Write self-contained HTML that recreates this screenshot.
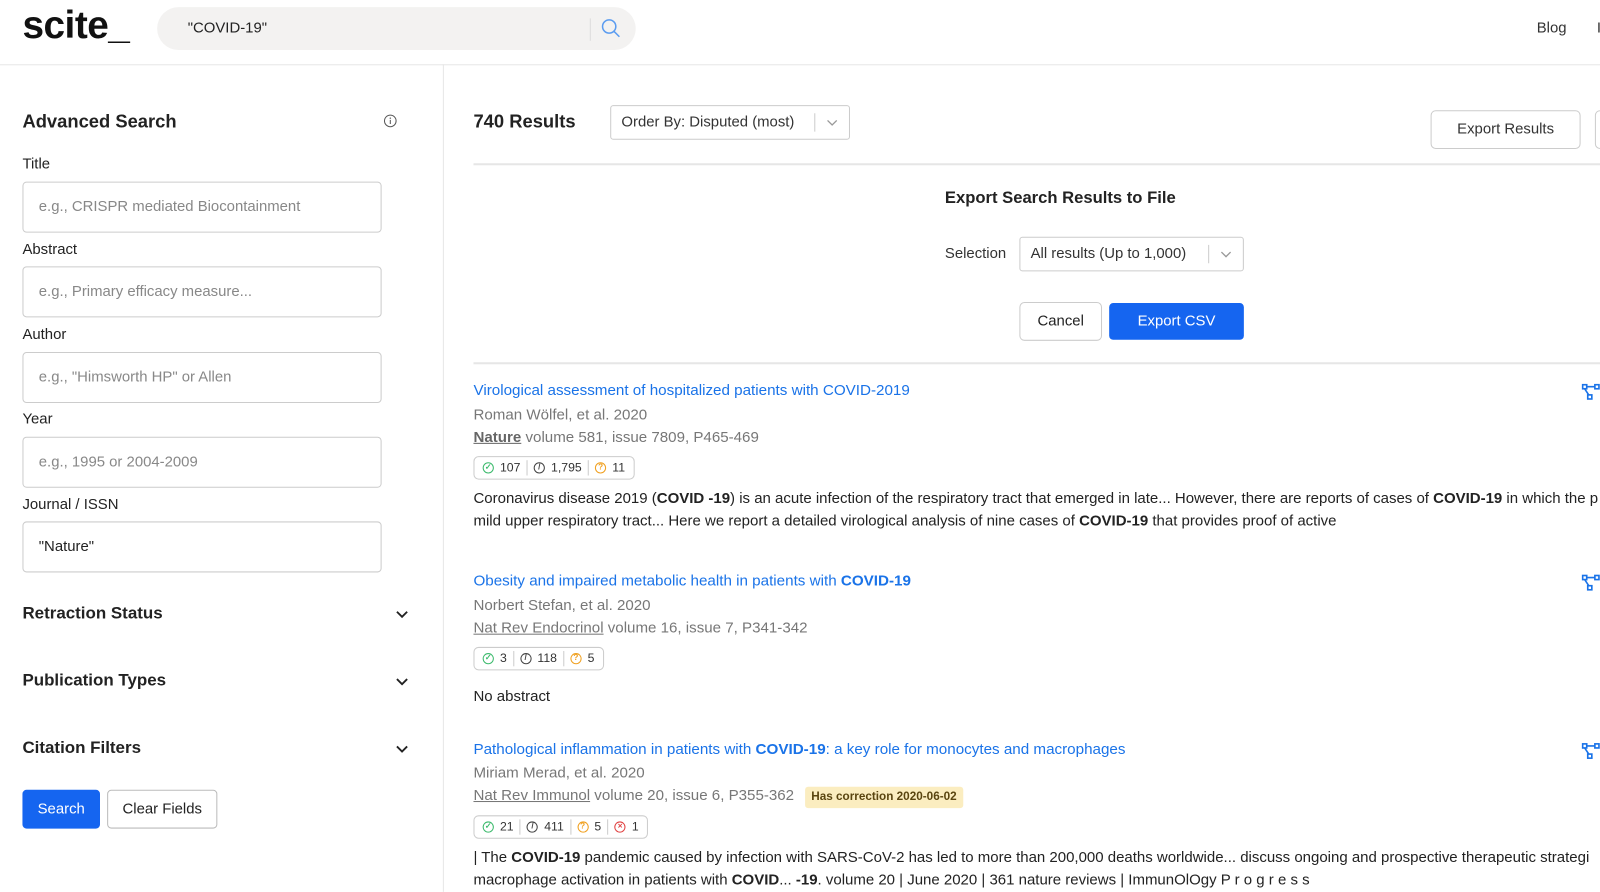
<!DOCTYPE html>
<html><head><meta charset="utf-8"><style>
*{box-sizing:border-box;margin:0;padding:0}
body{width:1600px;height:892px;overflow:hidden;background:#fff;font-family:"Liberation Sans",sans-serif;color:#222;position:relative}
#w{position:absolute;left:0;top:0;width:1568px;height:874px;transform:scale(1.0204);transform-origin:0 0;overflow:hidden}
.a{position:absolute;white-space:nowrap}
.inp{position:absolute;left:22px;width:352px;height:50px;border:1px solid #ccc;border-radius:4px;padding-left:15px;line-height:48px;font-size:14.6px;color:#888}
.lbl{position:absolute;left:22px;font-size:14.6px;color:#222}
.sec{position:absolute;left:22px;font-size:16.6px;font-weight:bold;color:#222}
.chev{position:absolute;left:388px;width:12px;height:12px}
.t{color:#1a73e8;font-size:14.9px}
.g{color:#777;font-size:14.8px}
.badge{position:absolute;height:23px;border:1px solid #ccc;border-radius:5px;font-size:12px;line-height:21px;padding:0 8px;display:flex;align-items:center;gap:6px;color:#333}
.sep{width:1px;height:15px;background:#ccc}
.ic{display:inline-block;width:11px;height:11px;border-radius:50%;border:1.4px solid;font-size:8px;line-height:8px;text-align:center;font-weight:bold}
.p{font-size:14.7px;color:#222}
</style></head><body><div id="w">
<div class="a" style="left:22px;top:4px;font-size:38px;font-weight:bold;letter-spacing:-0.5px;color:#111">scite_</div>
<div class="a" style="left:154px;top:7px;width:469px;height:42px;background:#f3f2f1;border-radius:21px"></div>
<div class="a" style="left:184px;top:20px;font-size:14.6px;color:#222">"COVID-19"</div>
<div class="a" style="left:578px;top:18px;width:1px;height:22px;background:#ddd"></div>
<svg class="a" style="left:589px;top:18px" width="20" height="20" viewBox="0 0 20 20"><circle cx="8" cy="8" r="6.5" fill="none" stroke="#5b9cf0" stroke-width="1.5"/><line x1="12.8" y1="12.8" x2="18" y2="18" stroke="#5b9cf0" stroke-width="1.5"/></svg>
<div class="a" style="left:1506px;top:20px;font-size:14.6px;color:#333">Blog</div>
<div class="a" style="left:1565px;top:20px;font-size:14.6px;color:#333">I</div>
<div class="a" style="left:0;top:63px;width:1600px;height:1px;background:#e6e6e6"></div>
<div class="a" style="left:434px;top:63px;width:1px;height:829px;background:#e6e6e6"></div>

<div class="sec" style="top:109px;font-size:18px">Advanced Search</div>
<svg class="a" style="left:376px;top:112px" width="13" height="13" viewBox="0 0 13 13"><circle cx="6.5" cy="6.5" r="5.7" fill="none" stroke="#555" stroke-width="1"/><line x1="6.5" y1="5.5" x2="6.5" y2="9.5" stroke="#555"/><circle cx="6.5" cy="3.8" r=".7" fill="#555"/></svg>
<div class="lbl" style="top:153px">Title</div>
<div class="inp" style="top:178px">e.g., CRISPR mediated Biocontainment</div>
<div class="lbl" style="top:237px">Abstract</div>
<div class="inp" style="top:261px">e.g., Primary efficacy measure...</div>
<div class="lbl" style="top:320px">Author</div>
<div class="inp" style="top:345px">e.g., "Himsworth HP" or Allen</div>
<div class="lbl" style="top:403px">Year</div>
<div class="inp" style="top:428px">e.g., 1995 or 2004-2009</div>
<div class="lbl" style="top:487px">Journal / ISSN</div>
<div class="inp" style="top:511px;color:#222">"Nature"</div>
<div class="sec" style="top:591px">Retraction Status</div>
<div class="sec" style="top:657px">Publication Types</div>
<div class="sec" style="top:723px">Citation Filters</div>
<svg class="chev" style="top:596px" viewBox="0 0 12 12"><path d="M1 3.5l5 5 5-5" fill="none" stroke="#222" stroke-width="1.8"/></svg>
<svg class="chev" style="top:662px" viewBox="0 0 12 12"><path d="M1 3.5l5 5 5-5" fill="none" stroke="#222" stroke-width="1.8"/></svg>
<svg class="chev" style="top:728px" viewBox="0 0 12 12"><path d="M1 3.5l5 5 5-5" fill="none" stroke="#222" stroke-width="1.8"/></svg>
<div class="a" style="left:22px;top:774px;width:76px;height:38px;background:#1565f0;border-radius:4px;color:#fff;font-size:14.6px;line-height:38px;text-align:center">Search</div>
<div class="a" style="left:105px;top:774px;width:108px;height:38px;border:1px solid #bbb;border-radius:4px;color:#222;font-size:14.6px;line-height:36px;text-align:center">Clear Fields</div>

<div class="a" style="left:464px;top:109px;font-size:18px;font-weight:bold">740 Results</div>
<div class="a" style="left:598px;top:103px;width:235px;height:34px;border:1px solid #ccc;border-radius:3px;font-size:14.6px;line-height:32px;padding-left:10px;color:#333">Order By: Disputed (most)</div>
<div class="a" style="left:798px;top:111px;width:1px;height:18px;background:#ccc"></div>
<svg class="a" style="left:810px;top:115px" width="11" height="10" viewBox="0 0 11 10"><path d="M1 3l4.5 4.5L10 3" fill="none" stroke="#999" stroke-width="1.3"/></svg>
<div class="a" style="left:1402px;top:108px;width:147px;height:38px;border:1px solid #ccc;border-radius:5px;font-size:14.6px;line-height:36px;text-align:center;color:#333">Export Results</div>
<div class="a" style="left:1563px;top:108px;width:40px;height:38px;border:1px solid #ccc;border-radius:5px"></div>
<div class="a" style="left:464px;top:160px;width:1136px;height:2px;background:#e6e6e6"></div>
<div class="a" style="left:926px;top:185px;font-size:16.3px;font-weight:bold">Export Search Results to File</div>
<div class="a" style="left:926px;top:241px;font-size:14.6px;color:#333">Selection</div>
<div class="a" style="left:999px;top:232px;width:220px;height:34px;border:1px solid #ccc;border-radius:3px;font-size:14.6px;line-height:32px;padding-left:10px;color:#333">All results (Up to 1,000)</div>
<div class="a" style="left:1184px;top:240px;width:1px;height:18px;background:#ccc"></div>
<svg class="a" style="left:1196px;top:244px" width="11" height="10" viewBox="0 0 11 10"><path d="M1 3l4.5 4.5L10 3" fill="none" stroke="#999" stroke-width="1.3"/></svg>
<div class="a" style="left:999px;top:296px;width:81px;height:38px;border:1px solid #ccc;border-radius:5px;font-size:14.6px;line-height:36px;text-align:center;color:#222">Cancel</div>
<div class="a" style="left:1087px;top:297px;width:132px;height:36px;background:#1565f0;border-radius:4px;font-size:14.6px;line-height:36px;text-align:center;color:#fff">Export CSV</div>
<div class="a" style="left:464px;top:355px;width:1136px;height:2px;background:#e6e6e6"></div>

<div class="a t" style="left:464px;top:375px">Virological assessment of hospitalized patients with COVID-2019</div>
<div class="a g" style="left:464px;top:399px">Roman Wölfel, et al. 2020</div>
<div class="a g" style="left:464px;top:421px"><u style="font-weight:bold;color:#666">Nature</u> volume 581, issue 7809, P465-469</div>
<div class="badge" style="left:464px;top:447px"><span class="ic" style="color:#3cba6c">✓</span>107<span class="sep"></span><span class="ic" style="color:#444">/</span>1,795<span class="sep"></span><span class="ic" style="color:#f0a020">?</span>11</div>
<div class="a p" style="left:464px;top:481px">Coronavirus disease 2019 (<b>COVID -19</b>) is an acute infection of the respiratory tract that emerged in late... However, there are reports of cases of <b>COVID-19</b> in which the p</div>
<div class="a p" style="left:464px;top:503px">mild upper respiratory tract... Here we report a detailed virological analysis of nine cases of <b>COVID-19</b> that provides proof of active</div>

<div class="a t" style="left:464px;top:562px">Obesity and impaired metabolic health in patients with <b>COVID-19</b></div>
<div class="a g" style="left:464px;top:586px">Norbert Stefan, et al. 2020</div>
<div class="a g" style="left:464px;top:608px"><u>Nat Rev Endocrinol</u> volume 16, issue 7, P341-342</div>
<div class="badge" style="left:464px;top:634px"><span class="ic" style="color:#3cba6c">✓</span>3<span class="sep"></span><span class="ic" style="color:#444">/</span>118<span class="sep"></span><span class="ic" style="color:#f0a020">?</span>5</div>
<div class="a p" style="left:464px;top:675px">No abstract</div>

<div class="a t" style="left:464px;top:727px">Pathological inflammation in patients with <b>COVID-19</b>: a key role for monocytes and macrophages</div>
<div class="a g" style="left:464px;top:750px">Miriam Merad, et al. 2020</div>
<div class="a g" style="left:464px;top:772px"><u>Nat Rev Immunol</u> volume 20, issue 6, P355-362</div>
<div class="a" style="left:789px;top:771px;height:21px;background:#fbedc0;border-radius:3px;padding:0 6px;font-size:11.5px;line-height:21px;color:#5a4510;font-weight:bold">Has correction 2020-06-02</div>
<div class="badge" style="left:464px;top:799px"><span class="ic" style="color:#3cba6c">✓</span>21<span class="sep"></span><span class="ic" style="color:#444">/</span>411<span class="sep"></span><span class="ic" style="color:#f0a020">?</span>5<span class="sep"></span><span class="ic" style="color:#e04040">×</span>1</div>
<div class="a p" style="left:464px;top:833px">| The <b>COVID-19</b> pandemic caused by infection with SARS-CoV-2 has led to more than 200,000 deaths worldwide... discuss ongoing and prospective therapeutic strategi</div>
<div class="a p" style="left:464px;top:855px">macrophage activation in patients with <b>COVID</b>... <b>-19</b>. volume 20 | June 2020 | 361 nature reviews | ImmunOlOgy P r o g r e s s</div>

<svg class="a" style="left:1550px;top:376px" width="20" height="18" viewBox="0 0 20 18"><g fill="none" stroke="#1a73e8" stroke-width="1.6"><rect x="1" y="1" width="4" height="4"/><rect x="6" y="11" width="4" height="4"/><rect x="13" y="1" width="4" height="4"/><path d="M5 3h8M3 5l4 6"/></g></svg>
<svg class="a" style="left:1550px;top:563px" width="20" height="18" viewBox="0 0 20 18"><g fill="none" stroke="#1a73e8" stroke-width="1.6"><rect x="1" y="1" width="4" height="4"/><rect x="6" y="11" width="4" height="4"/><rect x="13" y="1" width="4" height="4"/><path d="M5 3h8M3 5l4 6"/></g></svg>
<svg class="a" style="left:1550px;top:728px" width="20" height="18" viewBox="0 0 20 18"><g fill="none" stroke="#1a73e8" stroke-width="1.6"><rect x="1" y="1" width="4" height="4"/><rect x="6" y="11" width="4" height="4"/><rect x="13" y="1" width="4" height="4"/><path d="M5 3h8M3 5l4 6"/></g></svg>
</div></body></html>
